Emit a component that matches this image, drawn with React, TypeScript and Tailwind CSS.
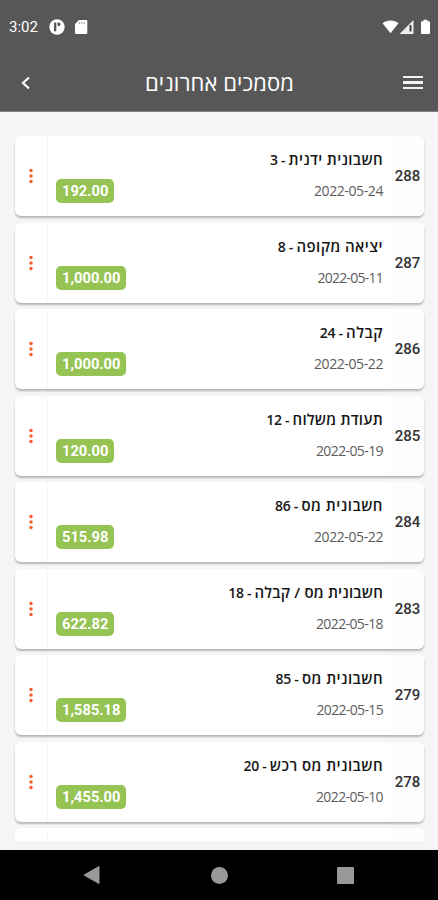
type Doc = { id: number; kind: string; num: number; date: string; amount: string; kindClass: string; dateClass: string }

const DOCS: Doc[] = [
  { id: 288, kind: 'חשבונית ידנית', num: 3, date: '2022-05-24', amount: '192.00', kindClass: 'tracking-[0.35px]', dateClass: 'tracking-[-0.4px]' },
  { id: 287, kind: 'יציאה מקופה', num: 8, date: '2022-05-11', amount: '1,000.00', kindClass: 'tracking-[0.45px]', dateClass: 'tracking-[-0.75px]' },
  { id: 286, kind: 'קבלה', num: 24, date: '2022-05-22', amount: '1,000.00', kindClass: 'tracking-[0.5px]', dateClass: 'tracking-[-0.4px]' },
  { id: 285, kind: 'תעודת משלוח', num: 12, date: '2022-05-19', amount: '120.00', kindClass: 'tracking-[0.25px]', dateClass: 'tracking-[-0.6px]' },
  { id: 284, kind: 'חשבונית מס', num: 86, date: '2022-05-22', amount: '515.98', kindClass: 'tracking-[0.5px]', dateClass: 'tracking-[-0.4px]' },
  { id: 283, kind: 'חשבונית מס / קבלה', num: 18, date: '2022-05-18', amount: '622.82', kindClass: 'tracking-[0.2px]', dateClass: 'tracking-[-0.6px]' },
  { id: 279, kind: 'חשבונית מס', num: 85, date: '2022-05-15', amount: '1,585.18', kindClass: 'tracking-[0.45px]', dateClass: 'tracking-[-0.65px]' },
  { id: 278, kind: 'חשבונית מס רכש', num: 20, date: '2022-05-10', amount: '1,455.00', kindClass: 'tracking-[0.45px]', dateClass: 'tracking-[-0.6px]' },
]

function StatusBar() {
  return (
    <div className="flex h-[54px] items-center pl-[9px] pr-[7px] font-[Roboto,sans-serif] text-white">
      <span className="w-[40px] pt-[1px] text-[15px] leading-none">3:02</span>
      <svg width="16" height="16" viewBox="0 0 16 16">
        <circle cx="8" cy="8" r="7.7" fill="#fff" />
        <path d="M5 3.500h2.300v8.800H5z" fill="#575757" />
        <path d="M8.500 3.500h1.300a1.700 1.700 0 0 1 0 3.400H8.500z" fill="#575757" />
      </svg>
      <svg className="ml-[9px]" width="14" height="16" viewBox="0 0 14 16">
        <path d="M5 1h7a1.300 1.300 0 0 1 1.300 1.300v11.400A1.300 1.300 0 0 1 12 15H2.300A1.300 1.300 0 0 1 1 13.700V5z" fill="#fff" />
        <path d="M5.300 3v2M7.700 3v2M10.100 3v2" stroke="#999" strokeWidth="1" />
      </svg>
      <svg className="ml-auto" width="17" height="16" viewBox="0 0 17 16">
        <path d="M.5 4.200C5 .5 12 .5 16.500 4.200L8.500 14.200z" fill="#fff" />
      </svg>
      <svg width="15" height="16" viewBox="0 0 15 16">
        <path d="M14.500 1v14H.5z" fill="#eee" />
        <path d="M11.500 6v6.500" stroke="#444" strokeWidth="2" />
      </svg>
      <svg className="ml-[6px]" width="11" height="16" viewBox="0 0 11 16">
        <path d="M3.500.7h4v1.500H9a1 1 0 0 1 1 1V14a1 1 0 0 1-1 1H2a1 1 0 0 1-1-1V3.200a1 1 0 0 1 1-1h1.500z" fill="#fff" />
      </svg>
    </div>
  )
}

function Header() {
  return (
    <div className="flex h-[57px] items-center justify-between pl-[20px] pr-[15px]">
      <svg width="12" height="14" viewBox="0 0 12 14">
        <path d="M9 1.500 3 7l6 5.500" fill="none" stroke="#fff" strokeWidth="2.200" />
      </svg>
      <h1 dir="rtl" className="ml-[4px] pb-[2px] font-['Open_Sans','Noto_Sans',sans-serif] text-[22px] leading-none tracking-[0.1px] text-white">
        מסמכים אחרונים
      </h1>
      <div className="flex w-[20px] flex-col gap-[3px]">
        <span className="h-[2.500px] bg-[#f2f2f2]" />
        <span className="h-[2.500px] bg-[#f2f2f2]" />
        <span className="h-[2.500px] bg-[#f2f2f2]" />
      </div>
    </div>
  )
}

function DocCard({ doc }: { doc: Doc }) {
  return (
    <div className="flex h-[80px] shrink-0 overflow-hidden rounded-[6px] bg-white shadow-[0_2px_2px_rgba(0,0,0,0.26)]">
      <div className="flex w-[33px] shrink-0 justify-center border-r border-[#f6f6f6]">
        <svg className="mt-[32px]" width="4" height="16" viewBox="0 0 4 16">
          <circle cx="2" cy="2.500" r="1.750" fill="#f4602f" />
          <circle cx="2" cy="8" r="1.750" fill="#f4602f" />
          <circle cx="2" cy="13.500" r="1.750" fill="#f4602f" />
        </svg>
      </div>
      <div className="flex flex-1 items-end pb-[13px] pl-[8px]">
        <span className="flex h-[24px] items-center rounded-[5px] bg-[#95c455] px-[6px] pt-[1px] font-[Roboto,sans-serif] text-[14.700px] font-bold text-white">
          {doc.amount}
        </span>
      </div>
      <div className="flex flex-col items-end pr-[7px] pt-[13px]">
        <p dir="rtl" className={`whitespace-nowrap font-['Open_Sans','Noto_Sans',sans-serif] text-[15px] font-semibold leading-[20px] text-[#161616] ${doc.kindClass}`}>
          {doc.kind}
          <span className="text-[14px] tracking-[-0.3px]"> - {doc.num}</span>
        </p>
        <p className={`mt-[11px] font-['Open_Sans',sans-serif] text-[14px] leading-[20px] text-[#5c5c5c] ${doc.dateClass}`}>{doc.date}</p>
      </div>
      <div className="flex w-[34px] shrink-0 items-center justify-center bg-[#fdfdfd] pl-[1px] pt-[1px] font-[Roboto,sans-serif] text-[15px] font-medium text-[#333]">
        {doc.id}
      </div>
    </div>
  )
}

export default function App() {
  return (
    <div className="flex h-[900px] w-[438px] flex-col overflow-hidden bg-[#f5f5f5]">
      <header className="h-[112px] shrink-0 border-b border-[#808080] bg-[#575757]">
        <StatusBar />
        <Header />
      </header>
      <main className="mb-[9px] flex min-h-0 flex-1 flex-col gap-[6.500px] overflow-hidden pl-[15px] pr-[14px] pt-[24px]">
        {DOCS.map(doc => <DocCard key={doc.id} doc={doc} />)}
        <div className="flex h-[80px] shrink-0 rounded-[6px] bg-white">
          <div className="w-[33px] border-r border-[#f6f6f6]" />
          <div className="ml-auto w-[34px] rounded-r-[6px] bg-[#fdfdfd]" />
        </div>
      </main>
      <nav className="flex h-[50px] shrink-0 items-center bg-black">
        <svg className="ml-[83px]" width="18" height="20" viewBox="0 0 18 20">
          <path d="M16 1.500v17L1 10z" fill="#999" stroke="#999" strokeLinejoin="round" />
        </svg>
        <span className="ml-[110px] size-[17px] rounded-full bg-[#999]" />
        <span className="ml-[109px] size-[17px] rounded-[1px] bg-[#999]" />
      </nav>
    </div>
  )
}
